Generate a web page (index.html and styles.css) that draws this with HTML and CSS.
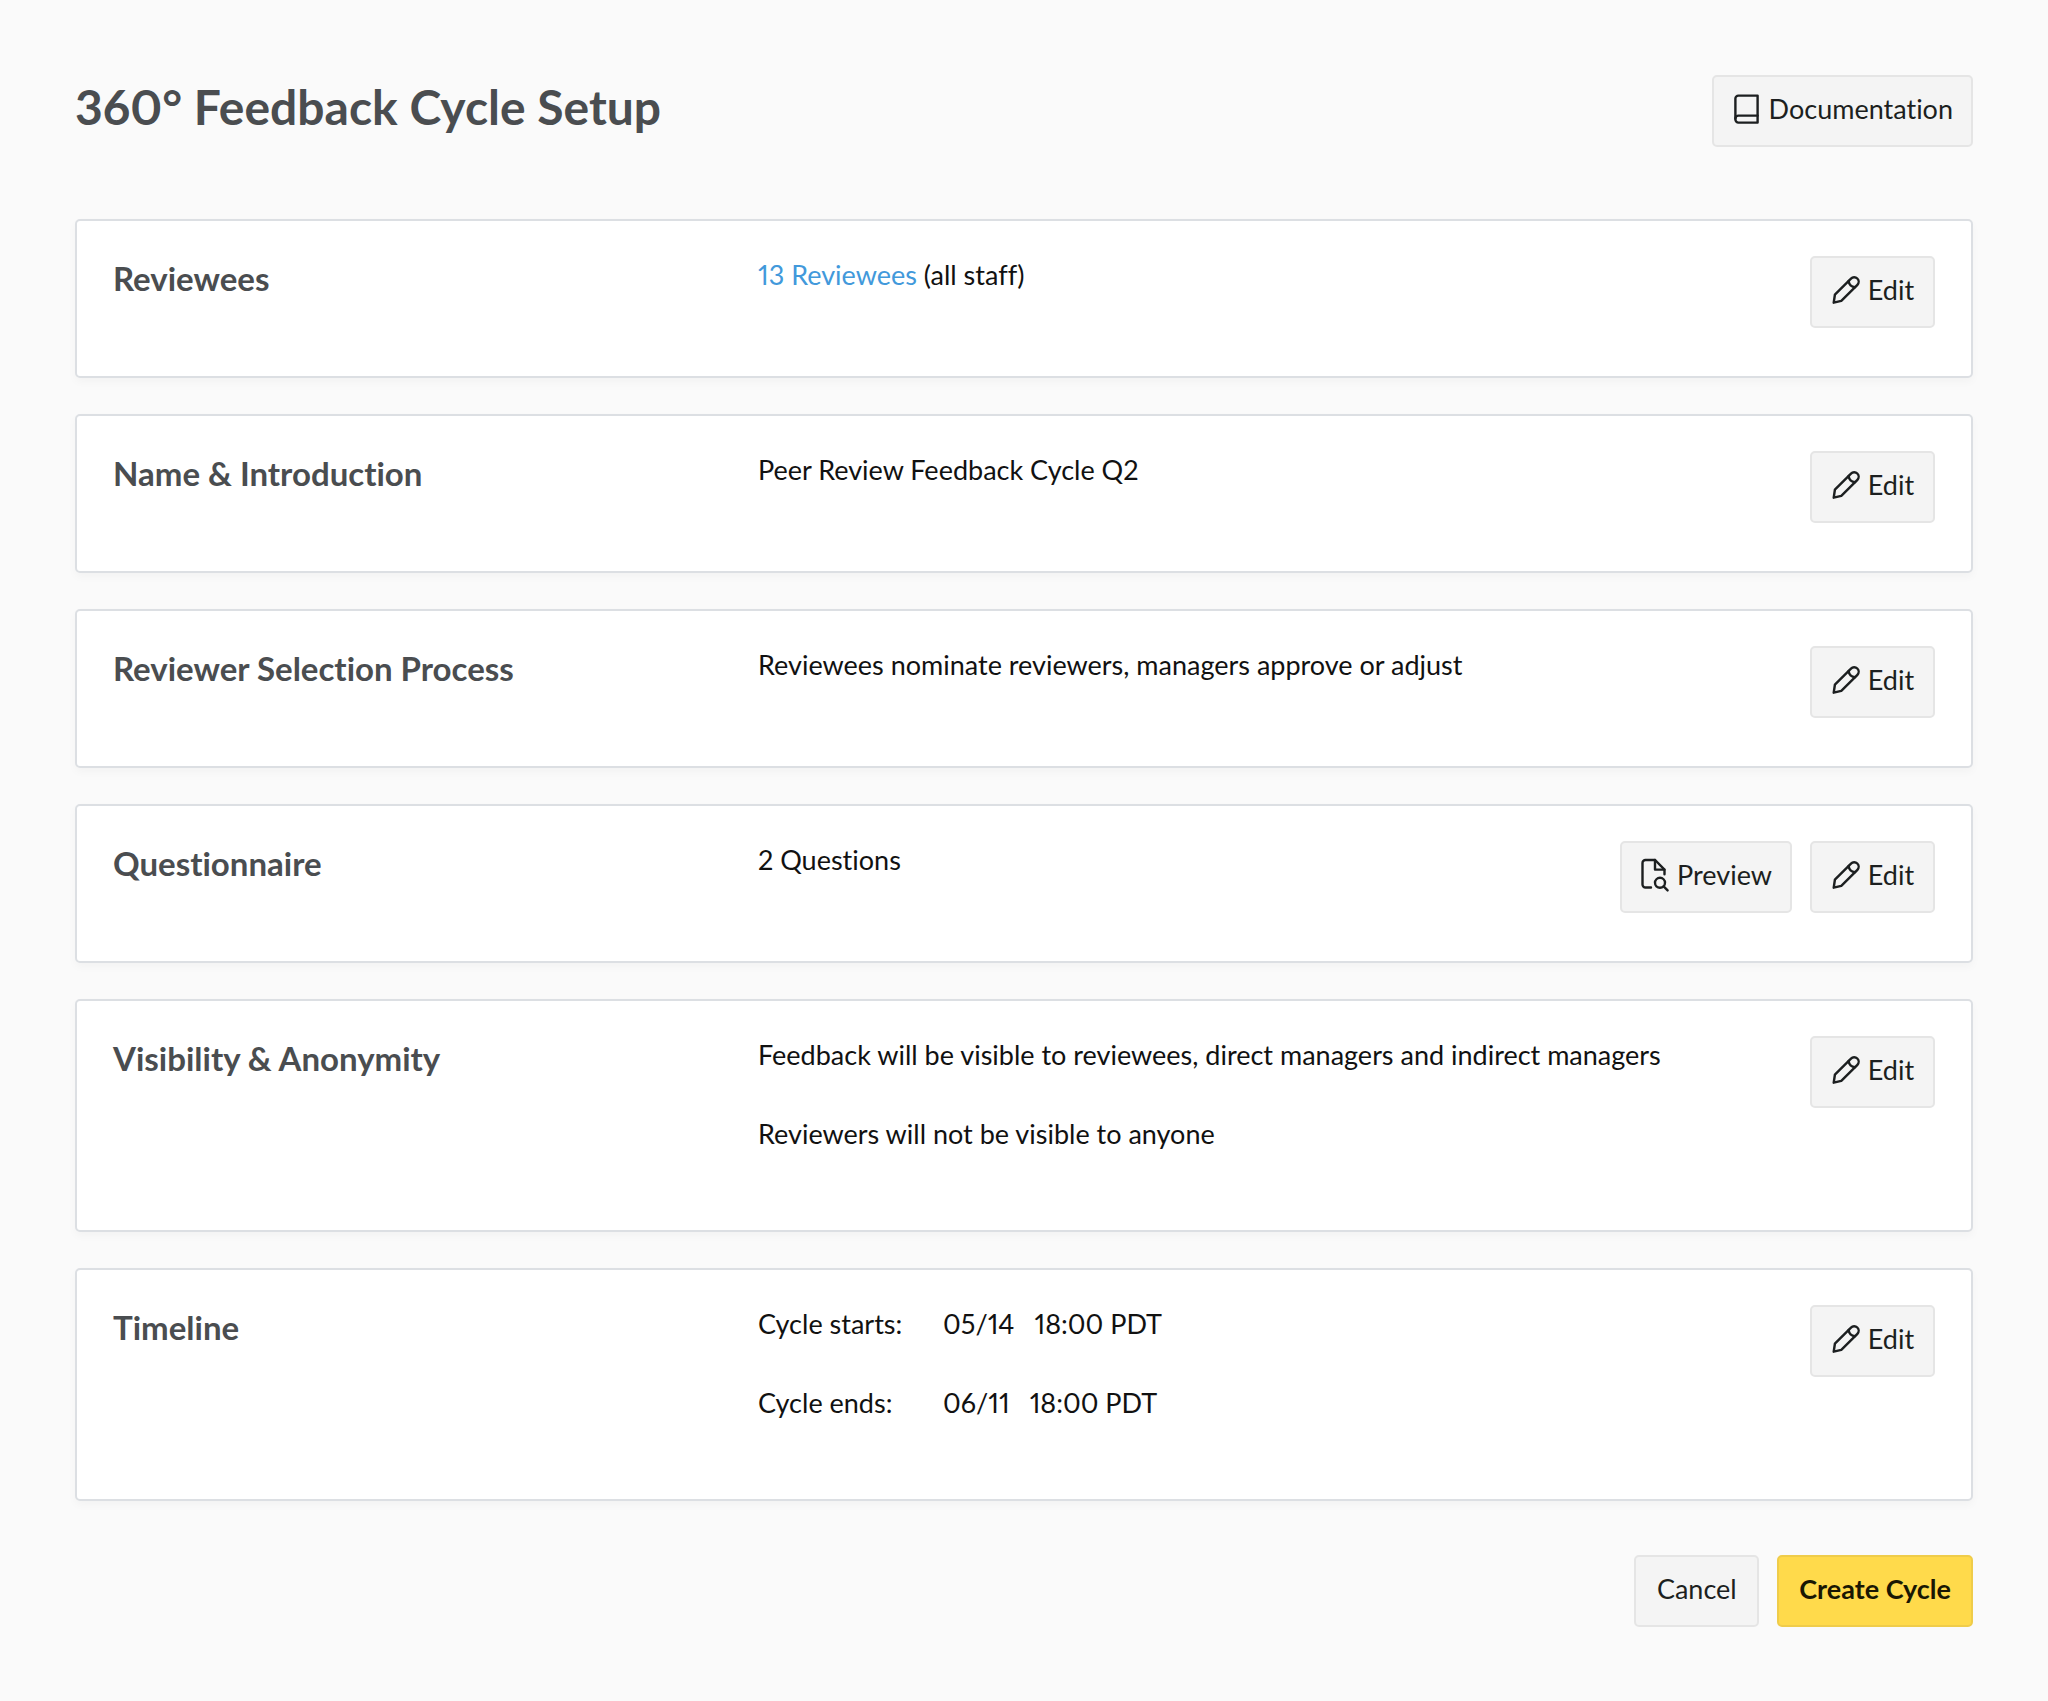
FILE: index.html
```html
<!DOCTYPE html>
<html lang="en">
<head>
    <meta charset="UTF-8">
    <meta name="viewport" content="width=device-width, initial-scale=1.0">
    <title>360° Feedback Cycle Setup</title>
    <link rel="stylesheet" href="styles.css">
</head>
<body>
    <!-- shared icons -->
    <svg class="sprite" aria-hidden="true">
        <symbol id="icon-book" viewBox="0 0 30 30">
            <path d="M25.6 1.6H6.4a3 3 0 0 0-3 3v21a3 3 0 0 0 3 3h19.2z"/>
            <path d="M3.4 24.6a3 3 0 0 1 3-3h19.2"/>
        </symbol>
        <symbol id="icon-pencil" viewBox="0 0 30 30">
            <path d="M2.7 27.7l1.2-8L20 3.6a4.4 4.4 0 0 1 6.4 6.2L10.3 25.9z"/>
            <path d="M17.7 5.9c.2 3.6 2.8 6.2 6.4 6.4"/>
        </symbol>
        <symbol id="icon-preview" viewBox="0 0 30 30">
            <path d="M11 27.5H5.5a3 3 0 0 1-3-3V3a3 3 0 0 1 3-3h9.6l9.4 9.6v4.6"/>
            <path d="M15 0v9.6h9.4"/>
            <circle cx="20" cy="22.8" r="5"/>
            <path d="M23.6 26.4l4 4"/>
        </symbol>
    </svg>

    <header class="page-header">
        <h1>360° Feedback Cycle Setup</h1>
        <button type="button" class="btn"><svg class="icon"><use href="#icon-book"/></svg>Documentation</button>
    </header>

    <main class="sections">
        <section class="card">
            <h2>Reviewees</h2>
            <div class="card-body">
                <p><a href="#reviewees">13 Reviewees</a> (all staff)</p>
            </div>
            <div class="card-actions">
                <button type="button" class="btn"><svg class="icon"><use href="#icon-pencil"/></svg>Edit</button>
            </div>
        </section>

        <section class="card">
            <h2>Name &amp; Introduction</h2>
            <div class="card-body">
                <p>Peer Review Feedback Cycle Q2</p>
            </div>
            <div class="card-actions">
                <button type="button" class="btn"><svg class="icon"><use href="#icon-pencil"/></svg>Edit</button>
            </div>
        </section>

        <section class="card">
            <h2>Reviewer Selection Process</h2>
            <div class="card-body">
                <p>Reviewees nominate reviewers, managers approve or adjust</p>
            </div>
            <div class="card-actions">
                <button type="button" class="btn"><svg class="icon"><use href="#icon-pencil"/></svg>Edit</button>
            </div>
        </section>

        <section class="card">
            <h2>Questionnaire</h2>
            <div class="card-body">
                <p>2 Questions</p>
            </div>
            <div class="card-actions">
                <button type="button" class="btn"><svg class="icon"><use href="#icon-preview"/></svg>Preview</button>
                <button type="button" class="btn"><svg class="icon"><use href="#icon-pencil"/></svg>Edit</button>
            </div>
        </section>

        <section class="card">
            <h2>Visibility &amp; Anonymity</h2>
            <div class="card-body">
                <p>Feedback will be visible to reviewees, direct managers and indirect managers</p>
                <p>Reviewers will not be visible to anyone</p>
            </div>
            <div class="card-actions">
                <button type="button" class="btn"><svg class="icon"><use href="#icon-pencil"/></svg>Edit</button>
            </div>
        </section>

        <section class="card">
            <h2>Timeline</h2>
            <div class="card-body">
                <p class="date-row"><span class="date-label">Cycle starts:</span><span>05/14</span><span>18:00 PDT</span></p>
                <p class="date-row"><span class="date-label">Cycle ends:</span><span>06/11</span><span>18:00 PDT</span></p>
            </div>
            <div class="card-actions">
                <button type="button" class="btn"><svg class="icon"><use href="#icon-pencil"/></svg>Edit</button>
            </div>
        </section>
    </main>

    <footer class="page-footer">
        <button type="button" class="btn">Cancel</button>
        <button type="button" class="btn btn-primary">Create Cycle</button>
    </footer>
</body>
</html>
```
FILE: styles.css
```css
* {
    box-sizing: border-box;
}
body {
    margin: 0;
    padding: 75px;
    background-color: #fafafa;
    color: #111;
    font-family: Lato, "Open Sans", sans-serif;
    font-size: 27px;
    line-height: 38px;
    font-variant-ligatures: none;
    font-variant-numeric: proportional-nums;
}
h1, h2, p {
    margin: 0;
}
h1, h2 {
    color: #4a4d50;
    font-weight: 700;
}
h1 {
    font-size: 48px;
    line-height: 64px;
}
h2 {
    font-size: 33px;
    line-height: 44px;
}
a {
    color: #4299db;
    text-decoration: none;
}
.sprite {
    display: none;
}
.page-header {
    display: flex;
    justify-content: space-between;
    align-items: flex-start;
    margin-bottom: 72px;
}
.sections {
    display: grid;
    gap: 36px;
}
.card {
    display: grid;
    grid-template-columns: 645px 1fr auto;
    align-items: start;
    padding: 35px 36px 37px;
    background-color: #fff;
    border: 2px solid #dcdfe3;
    border-radius: 5px;
    box-shadow: 0 4px 8px rgba(0, 0, 0, 0.03);
}
.card-body {
    display: grid;
    gap: 41px;
    padding-bottom: 40px;
}
.card-actions {
    display: flex;
    gap: 18px;
    margin-bottom: 11px;
}
.date-row {
    display: flex;
    gap: 20px;
}
.date-label {
    width: 165px;
}
.btn {
    display: flex;
    align-items: center;
    justify-content: center;
    gap: 7px;
    min-width: 125px;
    height: 72px;
    padding: 0 18px 5px;
    background-color: #f4f4f4;
    border: 2px solid #e5e5e5;
    border-radius: 5px;
    color: #1c1f20;
    font: inherit;
    cursor: pointer;
}
.btn-primary {
    background-color: #ffda4b;
    border-color: #efcc4a;
    color: #191703;
    font-weight: 700;
}
.icon {
    width: 30px;
    height: 30px;
    fill: none;
    stroke: currentColor;
    stroke-width: 2.4;
    stroke-linecap: round;
    stroke-linejoin: round;
    overflow: visible;
}
.sprite symbol {
    overflow: visible;
}
.page-footer {
    display: flex;
    justify-content: flex-end;
    gap: 18px;
    margin-top: 54px;
}
.page-footer .btn {
    padding: 0 20px 5px;
}
```
